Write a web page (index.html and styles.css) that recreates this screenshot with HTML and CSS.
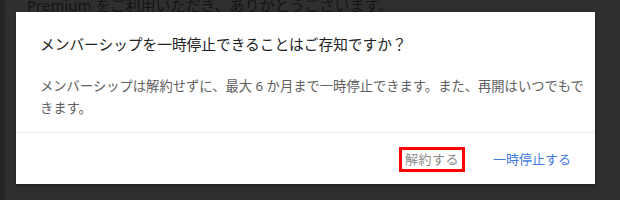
FILE: index.html
```html
<!DOCTYPE html>
<html lang="ja">
<head>
    <meta charset="UTF-8">
    <meta name="viewport" content="width=device-width, initial-scale=1.0">
    <title>メンバーシップの一時停止</title>
    <link rel="stylesheet" href="styles.css">
</head>
<body>

    <!-- Page behind the overlay -->
    <div class="page">
        <p class="welcome">Premium をご利用いただき、ありがとうございます。</p>
    </div>

    <!-- Pause dialog -->
    <div class="dialog">
        <h2 class="dialog-title">メンバーシップを一時停止できることはご存知ですか？</h2>
        <p class="dialog-text">メンバーシップは解約せずに、最大 6 か月まで一時停止できます。また、再開はいつでもできます。</p>
        <div class="dialog-actions">
            <button class="btn btn-cancel">解約する</button>
            <button class="btn btn-primary">一時停止する</button>
        </div>
    </div>

</body>
</html>
```

FILE: styles.css
```css
body {
    font-family: "Noto Sans", "Noto Sans CJK JP", sans-serif;
    margin: 0;
    padding: 0;
    background-color: #2f2f2f;
    width: 620px;
    height: 200px;
    overflow: hidden;
    position: relative;
    box-shadow: inset 5px 0 0 #252525;
}

.page {
    padding: 0 27px;
}

.welcome {
    margin: -5px 0 0;
    font-size: 15px;
    line-height: 20px;
    color: #141414;
}

.dialog {
    position: absolute;
    left: 16px;
    top: 12px;
    width: 579px;
    height: 172px;
    background-color: #fff;
    box-shadow: 0 1px 3px rgba(0, 0, 0, 0.4);
}

.dialog-title {
    margin: 0;
    padding: 21px 24px 0;
    font-size: 14.7px;
    font-weight: normal;
    line-height: 22px;
    color: #212121;
}

.dialog-text {
    margin: 0;
    padding: 20px 4px 13px 24px;
    font-size: 13.3px;
    line-height: 22px;
    color: #606060;
}

.dialog-actions {
    display: flex;
    justify-content: flex-end;
    align-items: center;
    gap: 28px;
    border-top: 1px solid #ececec;
    padding: 14px 24px 12px;
}

.btn {
    font-family: inherit;
    font-size: 13px;
    line-height: 19px;
    background: none;
    border: none;
    padding: 0;
    cursor: pointer;
}

.btn-cancel {
    color: #8a8a8a;
    border: 3px solid #f00;
    padding: 0 3px;
    letter-spacing: 0.5px;
}

.btn-primary {
    color: #3e7be0;
}
```
